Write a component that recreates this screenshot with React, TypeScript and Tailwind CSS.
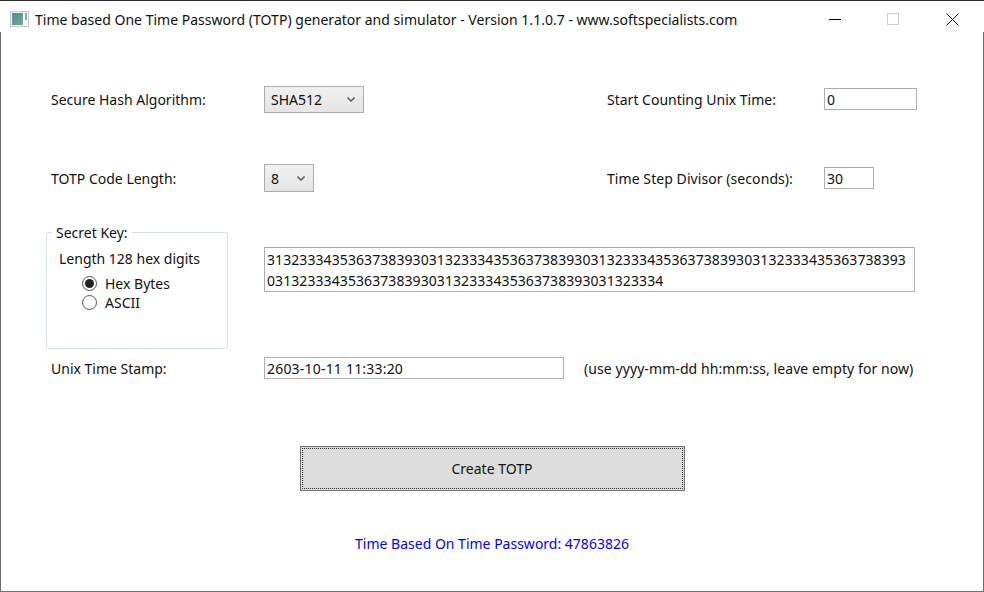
const font = "[font-family:'Noto_Sans','Open_Sans',sans-serif]";

function Chevron() {
  return (
    <svg width="8" height="5" viewBox="0 0 8 5" className="shrink-0">
      <path d="M0.5 0.6 L4 4 L7.5 0.6" fill="none" stroke="#606060" strokeWidth="1.5" />
    </svg>
  );
}

function Combo({ value, w, h }: { value: string; w: string; h: string }) {
  return (
    <div className={`${w} ${h} flex items-center justify-between border border-[#acacac] bg-gradient-to-b from-[#f0f0f0] to-[#e5e5e5] pl-[6px] pr-[8px] text-[#111]`}>
      <span>{value}</span>
      <Chevron />
    </div>
  );
}

function Field({ value, cls }: { value: string; cls: string }) {
  return (
    <div className={`${cls} flex items-center border border-[#abadb3] bg-white pl-[2px] text-[#111]`}>
      {value}
    </div>
  );
}

function Radio({ checked, label }: { checked?: boolean; label: string }) {
  return (
    <div className="flex h-[19px] items-center gap-[8px] pl-[23px]">
      <span className="flex h-[15px] w-[15px] items-center justify-center rounded-full border border-[#555] bg-white">
        {checked && <span className="h-[9px] w-[9px] rounded-full bg-[#222]" />}
      </span>
      <span>{label}</span>
    </div>
  );
}

export default function App() {
  return (
    <div className={`${font} flex h-[592px] w-[984px] flex-col overflow-hidden border-t border-t-[#2b2b2b] bg-white text-[14px] leading-[19px] text-[#111]`}>
      <div className="flex h-[31px] shrink-0 items-center pl-[10px] pt-[5px]">
        <svg width="19" height="16" viewBox="0 0 19 16" className="mr-[6px] shrink-0">
          <defs>
            <linearGradient id="ic" x1="0" y1="0" x2="1" y2="1">
              <stop offset="0" stopColor="#4f86a0" />
              <stop offset="1" stopColor="#72ad82" />
            </linearGradient>
          </defs>
          <rect x="0.5" y="0.5" width="18" height="15" fill="#f6f6f6" stroke="#c4c4c4" />
          <rect x="2" y="2" width="11" height="12" fill="url(#ic)" />
          <rect x="15" y="2" width="2" height="7" fill="#7fa8c0" />
        </svg>
        <span className="whitespace-nowrap tracking-[0.014px]">Time based One Time Password (TOTP) generator and simulator - Version 1.1.0.7 - www.softspecialists.com</span>
        <div className="ml-auto flex items-center">
          <span className="mr-[46px] h-[1px] w-[12px] bg-black" />
          <span className="mr-[47px] h-[12px] w-[12px] border border-[#cccccc]" />
          <svg width="13" height="13" viewBox="0 0 13 13" className="mr-[25px]">
            <path d="M0.5 0.5 L12.5 12.5 M12.5 0.5 L0.5 12.5" stroke="#111" strokeWidth="1" />
          </svg>
        </div>
      </div>

      <div className="flex flex-1 flex-col border-x border-b border-[#6f6f6f]">
        <div className="mt-[54px] flex h-[27px] items-center pl-[50px]">
          <span className="w-[213px]">Secure Hash Algorithm:</span>
          <Combo value="SHA512" w="w-[100px]" h="h-[27px]" />
          <span className="ml-[243px] w-[217px]">Start Counting Unix Time:</span>
          <Field value="0" cls="mb-[1px] h-[22px] w-[93px]" />
        </div>

        <div className="mt-[51px] flex h-[28px] items-center pl-[50px]">
          <span className="w-[213px]">TOTP Code Length:</span>
          <Combo value="8" w="w-[50px]" h="h-[28px]" />
          <span className="ml-[293px] w-[217px] tracking-[0.07px]">Time Step Divisor (seconds):</span>
          <Field value="30" cls="h-[22px] w-[50px]" />
        </div>

        <div className="mt-[40px] flex pl-[45px]">
          <div className="relative h-[117px] w-[182px] rounded-[3px] border border-[#d5dfe5] pl-[12px] pt-[16px]">
            <span className="absolute left-[5px] top-[-10px] bg-white px-[4px]">Secret Key:</span>
            <div className="mb-[6px]">Length 128 hex digits</div>
            <Radio checked label="Hex Bytes" />
            <Radio label="ASCII" />
          </div>
          <div className="ml-[36px] mt-[15px] h-[45px] w-[651px] border border-[#abadb3] px-[2px] py-[1px] leading-[21px] tracking-[0.08px] break-all">
            31323334353637383930313233343536373839303132333435363738393031323334353637383930313233343536373839303132333435363738393031323334
          </div>
        </div>

        <div className="mt-[8px] flex h-[22px] items-center pl-[50px]">
          <span className="w-[213px]">Unix Time Stamp:</span>
          <Field value="2603-10-11 11:33:20" cls="h-[22px] w-[300px] tracking-[0.2px]" />
          <span className="ml-[20px] whitespace-nowrap tracking-[0.08px]">(use yyyy-mm-dd hh:mm:ss, leave empty for now)</span>
        </div>

        <div className="mt-[67px] flex justify-center">
          <div className="flex h-[45px] w-[385px] items-center justify-center border border-[#707070] bg-[#dddddd] p-[1px]">
            <div className="flex h-full w-full items-center justify-center border border-dotted border-[#333]">Create TOTP</div>
          </div>
        </div>

        <div className="mt-[43px] text-center text-[#0000ff]">Time Based On Time Password: 47863826</div>
      </div>
    </div>
  );
}
